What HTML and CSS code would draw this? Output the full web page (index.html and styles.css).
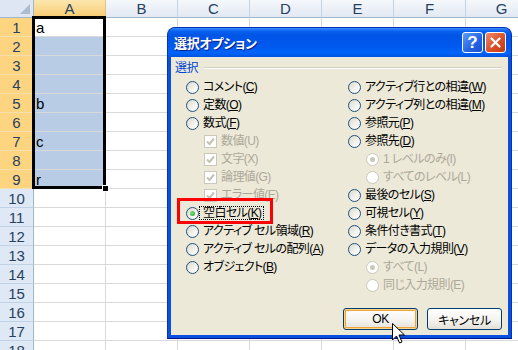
FILE: index.html
```html
<!DOCTYPE html>
<html lang="ja">
<head>
  <meta charset="UTF-8" />
  <title>選択オプション</title>
  <link rel="stylesheet" href="styles.css">
</head>
<body>
  <div class="sheet">
    <div class="row"><div class="corner"></div><div class="ch hl">A</div><div class="ch">B</div><div class="ch">C</div><div class="ch">D</div><div class="ch">E</div><div class="ch">F</div><div class="ch">G</div></div>
    <div class="row"><div class="rh hl">1</div><div class="cell">a</div><div class="cell"></div><div class="cell"></div><div class="cell"></div><div class="cell"></div><div class="cell"></div><div class="cell"></div></div>
    <div class="row"><div class="rh hl">2</div><div class="cell sel"></div><div class="cell"></div><div class="cell"></div><div class="cell"></div><div class="cell"></div><div class="cell"></div><div class="cell"></div></div>
    <div class="row"><div class="rh hl">3</div><div class="cell sel"></div><div class="cell"></div><div class="cell"></div><div class="cell"></div><div class="cell"></div><div class="cell"></div><div class="cell"></div></div>
    <div class="row"><div class="rh hl">4</div><div class="cell sel"></div><div class="cell"></div><div class="cell"></div><div class="cell"></div><div class="cell"></div><div class="cell"></div><div class="cell"></div></div>
    <div class="row"><div class="rh hl">5</div><div class="cell sel">b</div><div class="cell"></div><div class="cell"></div><div class="cell"></div><div class="cell"></div><div class="cell"></div><div class="cell"></div></div>
    <div class="row"><div class="rh hl">6</div><div class="cell sel"></div><div class="cell"></div><div class="cell"></div><div class="cell"></div><div class="cell"></div><div class="cell"></div><div class="cell"></div></div>
    <div class="row"><div class="rh hl">7</div><div class="cell sel">c</div><div class="cell"></div><div class="cell"></div><div class="cell"></div><div class="cell"></div><div class="cell"></div><div class="cell"></div></div>
    <div class="row"><div class="rh hl">8</div><div class="cell sel"></div><div class="cell"></div><div class="cell"></div><div class="cell"></div><div class="cell"></div><div class="cell"></div><div class="cell"></div></div>
    <div class="row"><div class="rh hl">9</div><div class="cell sel">r</div><div class="cell"></div><div class="cell"></div><div class="cell"></div><div class="cell"></div><div class="cell"></div><div class="cell"></div></div>
    <div class="row"><div class="rh">10</div><div class="cell"></div><div class="cell"></div><div class="cell"></div><div class="cell"></div><div class="cell"></div><div class="cell"></div><div class="cell"></div></div>
    <div class="row"><div class="rh">11</div><div class="cell"></div><div class="cell"></div><div class="cell"></div><div class="cell"></div><div class="cell"></div><div class="cell"></div><div class="cell"></div></div>
    <div class="row"><div class="rh">12</div><div class="cell"></div><div class="cell"></div><div class="cell"></div><div class="cell"></div><div class="cell"></div><div class="cell"></div><div class="cell"></div></div>
    <div class="row"><div class="rh">13</div><div class="cell"></div><div class="cell"></div><div class="cell"></div><div class="cell"></div><div class="cell"></div><div class="cell"></div><div class="cell"></div></div>
    <div class="row"><div class="rh">14</div><div class="cell"></div><div class="cell"></div><div class="cell"></div><div class="cell"></div><div class="cell"></div><div class="cell"></div><div class="cell"></div></div>
    <div class="row"><div class="rh">15</div><div class="cell"></div><div class="cell"></div><div class="cell"></div><div class="cell"></div><div class="cell"></div><div class="cell"></div><div class="cell"></div></div>
    <div class="row"><div class="rh">16</div><div class="cell"></div><div class="cell"></div><div class="cell"></div><div class="cell"></div><div class="cell"></div><div class="cell"></div><div class="cell"></div></div>
    <div class="row"><div class="rh">17</div><div class="cell"></div><div class="cell"></div><div class="cell"></div><div class="cell"></div><div class="cell"></div><div class="cell"></div><div class="cell"></div></div>
    <div class="row"><div class="rh">18</div><div class="cell"></div><div class="cell"></div><div class="cell"></div><div class="cell"></div><div class="cell"></div><div class="cell"></div><div class="cell"></div></div>
  </div>

  <div class="selection"><span class="handle"></span></div>

  <div class="dialog">
    <div class="titlebar">
      <span class="title">選択オプション</span>
      <span class="tbtn help">?</span>
      <span class="tbtn close">
        <svg width="11" height="11" viewBox="0 0 11 11"><path d="M1.5 1.5 L9.5 9.5 M9.5 1.5 L1.5 9.5" stroke="#fff" stroke-width="2.2" stroke-linecap="round"/></svg>
      </span>
    </div>
    <div class="panel">
      <div class="group-label">選択</div>
      <div class="columns">
        <div class="col">
          <div class="opt"><span class="radio"></span><span>コメント(<u>C</u>)</span></div>
          <div class="opt"><span class="radio"></span><span>定数(<u>O</u>)</span></div>
          <div class="opt"><span class="radio"></span><span>数式(<u>F</u>)</span></div>
          <div class="opt sub off"><span class="check"><svg width="11" height="11" viewBox="0 0 11 11"><path d="M2 5.5 L4.5 8 L9 2.5" fill="none" stroke="#c4c2b4" stroke-width="2"/></svg></span><span>数値(U)</span></div>
          <div class="opt sub off"><span class="check"><svg width="11" height="11" viewBox="0 0 11 11"><path d="M2 5.5 L4.5 8 L9 2.5" fill="none" stroke="#c4c2b4" stroke-width="2"/></svg></span><span>文字(X)</span></div>
          <div class="opt sub off"><span class="check"><svg width="11" height="11" viewBox="0 0 11 11"><path d="M2 5.5 L4.5 8 L9 2.5" fill="none" stroke="#c4c2b4" stroke-width="2"/></svg></span><span>論理値(G)</span></div>
          <div class="opt sub off"><span class="check"><svg width="11" height="11" viewBox="0 0 11 11"><path d="M2 5.5 L4.5 8 L9 2.5" fill="none" stroke="#c4c2b4" stroke-width="2"/></svg></span><span>エラー値(E)</span></div>
          <div class="opt marked"><span class="radio on"></span><span class="focus">空白セル(<u>K</u>)</span><span class="mark"></span></div>
          <div class="opt"><span class="radio"></span><span>アクティブ セル領域(<u>R</u>)</span></div>
          <div class="opt"><span class="radio"></span><span>アクティブ セルの配列(<u>A</u>)</span></div>
          <div class="opt"><span class="radio"></span><span>オブジェクト(<u>B</u>)</span></div>
        </div>
        <div class="col">
          <div class="opt"><span class="radio"></span><span>アクティブ行との相違(<u>W</u>)</span></div>
          <div class="opt"><span class="radio"></span><span>アクティブ列との相違(<u>M</u>)</span></div>
          <div class="opt"><span class="radio"></span><span>参照元(<u>P</u>)</span></div>
          <div class="opt"><span class="radio"></span><span>参照先(<u>D</u>)</span></div>
          <div class="opt sub off"><span class="radio on"></span><span>1 レベルのみ(I)</span></div>
          <div class="opt sub off"><span class="radio"></span><span>すべてのレベル(L)</span></div>
          <div class="opt"><span class="radio"></span><span>最後のセル(<u>S</u>)</span></div>
          <div class="opt"><span class="radio"></span><span>可視セル(<u>Y</u>)</span></div>
          <div class="opt"><span class="radio"></span><span>条件付き書式(<u>T</u>)</span></div>
          <div class="opt"><span class="radio"></span><span>データの入力規則(<u>V</u>)</span></div>
          <div class="opt sub off"><span class="radio on"></span><span>すべて(L)</span></div>
          <div class="opt sub off"><span class="radio"></span><span>同じ入力規則(E)</span></div>
        </div>
      </div>
      <div class="footer">
        <button class="btn default">OK</button>
        <button class="btn">キャンセル</button>
      </div>
    </div>
  </div>

  <svg class="cursor" width="14" height="22" viewBox="0 0 14 22">
    <path d="M0.5 0.5 L0.5 17 L4.5 13 L7.5 20 L10 19 L7 12 L12.5 12 Z" fill="#fff" stroke="#000" stroke-width="1" stroke-linejoin="miter"/>
  </svg>
</body>
</html>
```

FILE: styles.css
```css
html, body {
  margin: 0;
  width: 518px;
  height: 350px;
  overflow: hidden;
  background: #fff;
}
body {
  position: relative;
  font-family: "Liberation Sans", Arial, sans-serif;
}

/* spreadsheet */
.sheet {
  display: grid;
  grid-template-columns: 34px repeat(7, 72px);
  grid-template-rows: 18px;
  grid-auto-rows: 19px;
}
.row {
  display: contents;
}
.sheet > .row > div {
  box-sizing: border-box;
  border-right: 1px solid #d9d9d9;
  border-bottom: 1px solid #d9d9d9;
}
.corner {
  position: relative;
  background: #dde6f2;
}
.sheet > .row > .corner {
  border-right-color: #9eb6ce;
  border-bottom-color: #9eb6ce;
}
.corner::after {
  content: "";
  position: absolute;
  right: 3px;
  bottom: 3px;
  border-style: solid;
  border-width: 0 0 10px 10px;
  border-color: transparent transparent #aebccf transparent;
}
.ch {
  background: linear-gradient(#f5f8fc, #e2e9f3);
  color: #27415f;
  font-size: 15px;
  line-height: 17px;
  text-align: center;
}
.sheet > .row > .ch {
  border-right-color: #c3d2e5;
  border-bottom-color: #9eb6ce;
}
.ch.hl {
  background: linear-gradient(#fce6ae, #f7cc72);
}
.sheet > .row > .ch.hl {
  border-bottom-color: #f0b14a;
  border-right-color: #e7c17a;
}
.rh {
  background: #dfe8f5;
  color: #27415f;
  font-size: 15px;
  line-height: 19px;
  text-align: center;
}
.sheet > .row > .rh {
  border-right-color: #9eb6ce;
  border-bottom-color: #c1d1e6;
}
.rh.hl {
  background: #fdd47f;
}
.sheet > .row > .rh.hl {
  border-bottom-color: #f5e0ad;
}
.cell {
  font-size: 15px;
  line-height: 19px;
  padding-left: 2px;
  color: #000;
}
.cell.sel {
  background: #b8cce6;
}

.selection {
  position: absolute;
  left: 32px;
  top: 16px;
  width: 74px;
  height: 173px;
  box-sizing: border-box;
  border: 3px solid #000;
}
.handle {
  position: absolute;
  right: -5px;
  bottom: -5px;
  width: 5px;
  height: 5px;
  background: #000;
  box-shadow: 0 0 0 1px #fff;
}

/* dialog */
.dialog {
  position: absolute;
  left: 167px;
  top: 27px;
  width: 345px;
  height: 312px;
  box-sizing: border-box;
  display: flex;
  flex-direction: column;
  background: #0a50de;
  border: 1px solid #0731b8;
  border-bottom-color: #00138c;
  border-radius: 8px 8px 0 0;
  font-family: "Liberation Sans", "Noto Sans CJK JP", sans-serif;
  font-size: 12px;
  font-feature-settings: "palt";
  letter-spacing: -0.6px;
  color: #000;
}
.titlebar {
  height: 29px;
  display: flex;
  align-items: center;
  gap: 2px;
  padding: 0 5px 0 6px;
  border-radius: 7px 7px 0 0;
  background: linear-gradient(#3d8ff8 0px, #0a62f0 3px, #0055e6 7px, #0058ee 18px, #0063f8 25px, #0052e0 29px);
}
.title {
  flex: 1;
  color: #fff;
  font-size: 13px;
  font-weight: bold;
  letter-spacing: -0.3px;
  text-shadow: 1px 1px 0 #0a1e8a;
}
.tbtn {
  width: 21px;
  height: 21px;
  box-sizing: border-box;
  border: 1px solid #fff;
  border-radius: 3px;
  display: flex;
  align-items: center;
  justify-content: center;
}
.help {
  background: linear-gradient(135deg, #5e9bf8, #2563e4 60%, #1b4fd2);
  color: #fff;
  font-size: 17px;
  font-weight: bold;
  letter-spacing: 0;
}
.close {
  background: linear-gradient(135deg, #f08a6a, #d9502a 55%, #c13a14);
}

.panel {
  flex: 1;
  margin: 0 3px 3px;
  padding: 4px 6px 5px 4px;
  background: #ece9d8;
  display: flex;
  flex-direction: column;
}
.group-label {
  height: 14px;
  display: flex;
  align-items: center;
  gap: 6px;
  color: #0046d5;
  line-height: 14px;
}
.group-label::after {
  content: "";
  flex: 1;
  border-top: 1px solid #d0d0bf;
  border-bottom: 1px solid #fff;
}
.columns {
  display: grid;
  grid-template-columns: 162px 1fr;
  margin-top: 3px;
  padding-left: 11px;
}
.opt {
  height: 18px;
  display: flex;
  align-items: center;
  gap: 4px;
  white-space: nowrap;
  line-height: 14px;
}
.opt.sub {
  padding-left: 18px;
}
.opt.off {
  color: #aca899;
}
.opt u {
  text-underline-offset: 1px;
}
.radio {
  flex: none;
  position: relative;
  width: 13px;
  height: 13px;
  box-sizing: border-box;
  border-radius: 50%;
  border: 1px solid #1c5180;
  background: linear-gradient(135deg, #dcd9cb, #f4f3ee 60%, #fff);
}
.radio.on::after {
  content: "";
  position: absolute;
  left: 3px;
  top: 3px;
  width: 5px;
  height: 5px;
  border-radius: 50%;
  background: radial-gradient(circle at 40% 40%, #7fe07f, #21a121);
}
.off .radio {
  border-color: #cac8bb;
  background: #fff;
}
.off .radio.on::after {
  background: #cac8bb;
}
.check {
  flex: none;
  width: 13px;
  height: 13px;
  box-sizing: border-box;
  border: 1px solid #cac8bb;
  background: #fff;
  display: flex;
  align-items: center;
  justify-content: center;
}
.marked {
  position: relative;
  gap: 0;
}
.focus {
  padding: 0 2px 0 3px;
  border: 1px dotted #000;
  line-height: 12px;
}
.mark {
  position: absolute;
  left: -9px;
  top: -6px;
  width: 96px;
  height: 26px;
  box-sizing: border-box;
  border: 3px solid #f00;
}

.footer {
  margin-top: auto;
  display: flex;
  justify-content: flex-end;
  gap: 9px;
}
.btn {
  width: 75px;
  height: 22px;
  padding: 0;
  border: 1px solid #003c74;
  border-radius: 3px;
  background: linear-gradient(#fff, #f3f2ee 60%, #e3e0d5);
  font-family: "Liberation Sans", "Noto Sans CJK JP", sans-serif;
  font-size: 12px;
  font-feature-settings: "palt";
  letter-spacing: -0.3px;
  color: #000;
}
.btn.default {
  box-shadow: inset 0 0 0 1px #fbd58a, inset 0 0 0 2px #f0a53c;
}

.cursor {
  position: absolute;
  left: 392px;
  top: 323px;
}
```
